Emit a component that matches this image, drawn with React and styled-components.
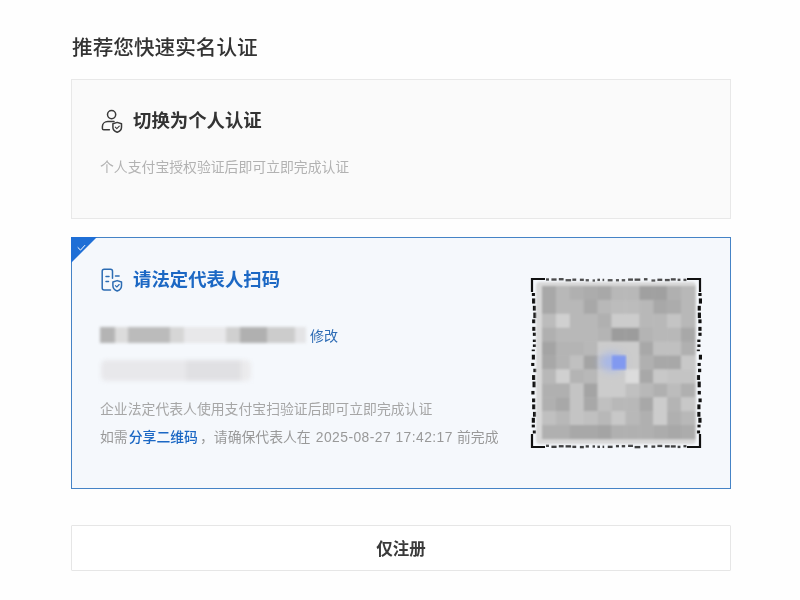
import React from "react";
import styled, { createGlobalStyle } from "styled-components";

const Global = createGlobalStyle`
  html, body { margin: 0; padding: 0; background: #fff; }
  body { font-family: "Noto Sans CJK SC", "Liberation Sans", sans-serif; }
`;

const Page = styled.div`
  width: 800px;
  height: 600px;
  box-sizing: border-box;
  padding: 31px 69px 0 71px;
  overflow: hidden;
  background: #fefefe;
  filter: blur(0.45px);
`;
const Heading = styled.h1`
  margin: 0 0 18px 1px;
  font-size: 20.65px;
  line-height: 30px;
  font-weight: 500;
  color: #333;
`;
const Card = styled.section`
  box-sizing: border-box;
  height: ${(p) => p.$h}px;
  margin-bottom: 18px;
  padding: ${(p) => p.$pad};
  border: 1px solid ${(p) => (p.$active ? "#4583c6" : "#e8e8e8")};
  background: ${(p) => (p.$active ? "#f5f8fc" : "#fafafa")};
  position: relative;
  display: flex;
  justify-content: space-between;
`;
const Corner = styled.svg`
  position: absolute;
  left: -1px;
  top: -1px;
`;
const Left = styled.div`
  display: flex;
  flex-direction: column;
  align-items: flex-start;
`;
const TitleRow = styled.div`
  display: flex;
  align-items: center;
  gap: 10px;
  height: 24px;
  margin: 0 0 ${(p) => p.$gap}px 1px;
`;
const Title = styled.h2`
  margin: 0 0 4px;
  font-size: 18.4px;
  line-height: 24px;
  font-weight: 700;
  color: ${(p) => p.$color};
`;
const Desc = styled.p`
  margin: 0;
  font-size: 13.85px;
  line-height: 28px;
  color: ${(p) => p.$color};
  white-space: nowrap;
`;
const Num = styled.span`
  font-family: "Liberation Sans", sans-serif;
  letter-spacing: 0.45px;
  margin: 0 1px 0 2px;
`;
const Link = styled.a`
  margin: 0 2px 0 1px;
  color: ${(p) => p.$color};
  font-weight: 500;
`;
const MaskRow = styled.div`
  display: flex;
  align-items: center;
  gap: 4px;
  height: 20px;
  margin-bottom: 15px;
`;
const MaskA = styled.div`
  width: 206px;
  height: 16px;
  filter: blur(1.5px);
  background: linear-gradient(
    90deg,
    #b4b4b4 0 15px, #dcdcdc 15px 28px, #bbbbbb 28px 70px, #d6d6d6 70px 84px,
    #e8e8ea 84px 126px, #d0d0d0 126px 140px, #b0b0b0 140px 167px, #cccccc 167px 195px, #e4e4e6 195px 206px
  );
`;
const Edit = styled.a`
  font-size: 14px;
  line-height: 20px;
  color: #2f6db5;
`;
const MaskB = styled.div`
  width: 150px;
  height: 21px;
  margin: 0 0 13px 1px;
  border-radius: 5px;
  filter: blur(2px);
  background: linear-gradient(90deg, #e8e8eb 0 85px, #e0e0e3 85px 140px, #ebebed 140px 150px);
`;
const QrBox = styled.svg`
  display: block;
  flex: none;
  margin-top: 9px;
`;
const Button = styled.button`
  display: block;
  width: 660px;
  height: 46px;
  margin-top: 36px;
  padding: 0;
  border: 1px solid #e6e6e6;
  border-radius: 1px;
  background: #fff;
  font-family: inherit;
  font-size: 16.5px;
  font-weight: 700;
  color: #3a3a3a;
`;

const PersonIcon = () => (
  <svg width="22" height="24" viewBox="0 0 22 24" fill="none" stroke="#3a3a3a" strokeWidth="1.5" strokeLinecap="round" strokeLinejoin="round">
    <circle cx="10.6" cy="5.6" r="4.1" />
    <path d="M13 12.6h-6.2c-3 0-5.4 2-5.4 5v1.8c0 .9.6 1.4 1.4 1.4h5.6" />
    <path d="M16.2 13.4l4.3 1.4v3.5c0 2.6-1.8 4.2-4.3 5-2.5-.8-4.3-2.4-4.3-5v-3.5z" />
    <path d="M14.3 18.2l1.5 1.5 2.5-2.6" strokeWidth="1.1" />
  </svg>
);
const DocIcon = () => (
  <svg width="22" height="24" viewBox="0 0 22 24" fill="none" stroke="#2c6cb3" strokeWidth="1.5" strokeLinecap="round" strokeLinejoin="round">
    <path d="M9.5 22H3.2c-1.2 0-2-.8-2-2V3.2c0-1.2.8-2 2-2h6.3c1.2 0 2 .8 2 2v7" />
    <path d="M5 8.5h3M5 13.4h2.5M14.5 8h3.6" />
    <path d="M16.2 12.6l4.3 1.4v3.8c0 2.7-1.8 4.3-4.3 5.2-2.5-.9-4.3-2.5-4.3-5.2V14z" />
    <path d="M14.4 17.6l1.4 1.4 2.4-2.5" strokeWidth="1.1" />
  </svg>
);

const CELLS = [
  "a8 b8 b0 ac a8 b8 b8 a0 a0 b0 b8",
  "a8 b8 b8 a8 b8 bc bc b8 a8 ac b8",
  "bc d0 b8 b8 b0 cc cc b8 b8 c4 b8",
  "b0 b8 b8 b8 b4 9c 9c b4 b8 b8 a8",
  "a4 b4 b4 b8 cc cc cc a8 c0 c0 b0",
  "a8 b4 c0 a4 c4 c4 cc b0 a8 a8 c8",
  "b8 d0 b4 b8 cc cc dc a8 c8 c4 c4",
  "b0 b0 c4 a4 cc cc c0 b8 b0 bc b0",
  "b0 a8 c4 a8 c0 b8 b8 a8 cc b4 c8",
  "c0 b8 c4 c0 b8 c8 b8 b0 cc b0 b8",
  "b0 b0 a8 a8 a4 b0 b0 b0 ac a8 ac",
].map((r) => r.split(" "));

const rand = (seed) => {
  const x = Math.sin(seed * 127.1) * 43758.5453;
  return x - Math.floor(x);
};
const edgeMarks = () => {
  const out = [];
  let pos = 16;
  let i = 1;
  while (pos < 154) {
    const len = 1.5 + rand(i) * 4.5;
    const gap = 1 + rand(i + 50) * 3;
    out.push([pos, len, i]);
    pos += len + gap;
    i += 1;
  }
  return out;
};

const QrCode = () => {
  const marks = edgeMarks();
  return (
    <QrBox width="172" height="172" viewBox="0 0 172 172">
      <defs>
        <filter id="qrb" x="-5%" y="-5%" width="110%" height="110%">
          <feGaussianBlur stdDeviation="1.2" />
        </filter>
        <filter id="glow" x="-60%" y="-60%" width="220%" height="220%">
          <feGaussianBlur stdDeviation="4" />
        </filter>
      </defs>
      {marks.map(([p, l, i]) => (
        <g key={i} fill="#111">
          <rect x={p} y={1 + rand(i + 7) * 1.5} width={l} height="2.4" opacity="0.75" />
          <rect x={p} y={167.5 + rand(i + 9) * 1.5} width={l} height="2.4" opacity="0.8" />
          <rect x={1 + rand(i + 11) * 2.5} y={p} width="3.2" height={l} />
          <rect x={166.5 + rand(i + 13) * 2.5} y={p} width="3.2" height={l} />
        </g>
      ))}
      <path d="M2 15V2h13M157 2h13v13M2 157v13h13M157 170h13v-13" fill="none" stroke="#111" strokeWidth="2.2" />
      <rect x="6" y="5" width="160" height="162" rx="4" fill="#d8d8d8" filter="url(#qrb)" />
      <g filter="url(#qrb)">
        {CELLS.map((row, r) =>
          row.map((c, k) => (
            <rect key={`${r}-${k}`} x={12 + k * 13.9} y={9 + r * 13.9} width="14.2" height="14.2" fill={`#${c}${c}${c}`} />
          ))
        )}
      </g>
      <ellipse cx="82" cy="85" rx="12" ry="9" fill="#9db2f6" opacity="0.75" filter="url(#glow)" />
      <rect x="82" y="78.5" width="14" height="14" fill="#8199f0" filter="url(#qrb)" />
    </QrBox>
  );
};

export default function App() {
  return (
    <>
      <Global />
      <Page>
        <Heading>推荐您快速实名认证</Heading>
        <Card $h={140} $pad="29px 28px 0 28px">
          <Left>
            <TitleRow $gap={19}>
              <PersonIcon />
              <Title $color="#333">切换为个人认证</Title>
            </TitleRow>
            <Desc $color="#b2b2b2">个人支付宝授权验证后即可立即完成认证</Desc>
          </Left>
        </Card>
        <Card $active $h={252} $pad="30px 28px 0 28px">
          <Corner width="26" height="26" viewBox="0 0 26 26">
            <path d="M0 0h26L0 26z" fill="#1f6fd6" />
            <path d="M6.7 10.3l2.8 2.8 4.6-5" fill="none" stroke="#fff" strokeWidth="1" />
          </Corner>
          <Left>
            <TitleRow $gap={33}>
              <DocIcon />
              <Title $color="#1c68c4">请法定代表人扫码</Title>
            </TitleRow>
            <MaskRow>
              <MaskA />
              <Edit>修改</Edit>
            </MaskRow>
            <MaskB />
            <Desc $color="#a6a6a6">企业法定代表人使用支付宝扫验证后即可立即完成认证</Desc>
            <Desc $color="#999">
              如需<Link $color="#1c68c4">分享二维码</Link>，请确保代表人在 <Num>2025-08-27 17:42:17</Num> 前完成
            </Desc>
          </Left>
          <QrCode />
        </Card>
        <Button>仅注册</Button>
      </Page>
    </>
  );
}
